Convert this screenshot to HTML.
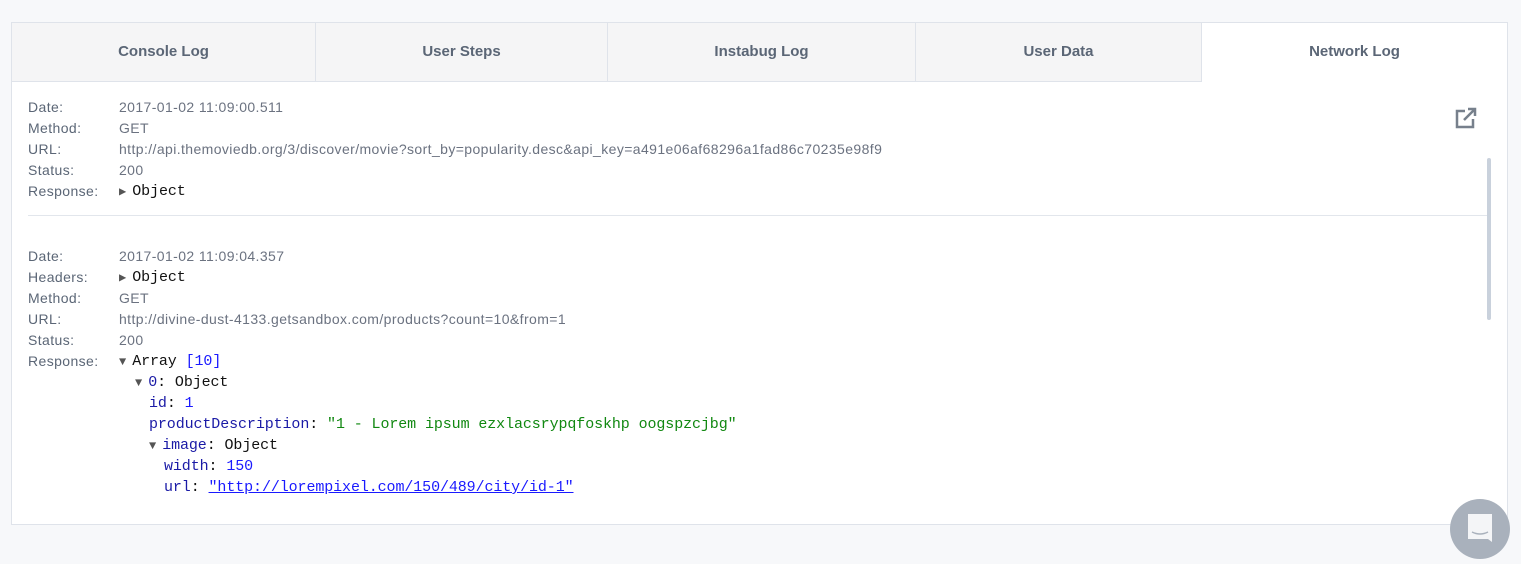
<!DOCTYPE html>
<html><head><style>
body{margin:0;background:#f7f8fa;width:1521px;height:564px;overflow:hidden;font-family:"Liberation Sans",sans-serif;}
.panel{position:absolute;left:11px;top:22px;width:1497px;height:503px;background:#fff;border:1px solid #dfe3ea;box-sizing:border-box;}
.tabs{position:absolute;left:0;top:0;height:59px;width:100%;}
.tab{position:absolute;top:0;height:59px;background:#f5f5f6;border-right:1px solid #dfe3ea;border-bottom:1px solid #dfe3ea;color:#5b6676;font-size:15px;font-weight:bold;line-height:57px;text-align:center;box-sizing:border-box;}
.tab.act{background:#fff;border:none;color:#5b6676;}
.row{position:absolute;left:16px;font-size:14px;letter-spacing:0.4px;color:#5b6676;height:21px;line-height:21px;white-space:nowrap;}
.row .v{position:absolute;left:91px;color:#6b7280;}
.row .v.mono,.mono{font-family:"Liberation Mono",monospace;font-size:15px;letter-spacing:-0.1px;color:#111;}
.tri{color:#555;font-size:12px;margin-right:6px;letter-spacing:0;}
.k{color:#1a1aa6;} .n{color:#1a1aff;} .s{color:#118811;}
a{color:#1a1aff;text-decoration:underline;}
</style></head><body>
<div class="panel">
<div class="tabs">
<div class="tab" style="left:0;width:304px">Console Log</div>
<div class="tab" style="left:304px;width:292px">User Steps</div>
<div class="tab" style="left:596px;width:308px">Instabug Log</div>
<div class="tab" style="left:904px;width:286px">User Data</div>
<div class="tab act" style="left:1190px;width:305px">Network Log</div>
</div>
<svg style="position:absolute;left:1443px;top:84px" width="22" height="22" viewBox="0 0 22 22"><path d="M10 4H2v16h16v-8" fill="none" stroke="#77808c" stroke-width="2.5"/><path d="M9 13L19 3M13 2h7v7" fill="none" stroke="#77808c" stroke-width="2.5"/></svg>
<div style="position:absolute;left:1475px;top:135px;width:4px;height:162px;background:#c9d1dc;border-radius:2px"></div>
<div style="position:absolute;left:16px;top:192px;width:1459px;height:1px;background:#e2e6ec"></div>

<div class="row" style="top:74px">Date:<span class="v">2017-01-02 11:09:00.511</span></div>
<div class="row" style="top:95px">Method:<span class="v">GET</span></div>
<div class="row" style="top:116px">URL:<span class="v">http://api.themoviedb.org/3/discover/movie?sort_by=popularity.desc&amp;api_key=a491e06af68296a1fad86c70235e98f9</span></div>
<div class="row" style="top:137px">Status:<span class="v">200</span></div>
<div class="row" style="top:158px">Response:<span class="v mono"><span class="tri">▶</span>Object</span></div>

<div class="row" style="top:223px">Date:<span class="v">2017-01-02 11:09:04.357</span></div>
<div class="row" style="top:244px">Headers:<span class="v mono"><span class="tri">▶</span>Object</span></div>
<div class="row" style="top:265px">Method:<span class="v">GET</span></div>
<div class="row" style="top:286px">URL:<span class="v">http://divine-dust-4133.getsandbox.com/products?count=10&amp;from=1</span></div>
<div class="row" style="top:307px">Status:<span class="v">200</span></div>
<div class="row" style="top:328px">Response:<span class="v mono"><span class="tri">▼</span>Array <span class="n">[10]</span></span></div>
<div class="row mono" style="top:349px;left:123px"><span class="tri">▼</span><span class="k">0</span>: Object</div>
<div class="row mono" style="top:370px;left:137px"><span class="k">id</span>: <span class="n">1</span></div>
<div class="row mono" style="top:391px;left:137px"><span class="k">productDescription</span>: <span class="s">"1 - Lorem ipsum ezxlacsrypqfoskhp oogspzcjbg"</span></div>
<div class="row mono" style="top:412px;left:137px"><span class="tri">▼</span><span class="k">image</span>: Object</div>
<div class="row mono" style="top:433px;left:152px"><span class="k">width</span>: <span class="n">150</span></div>
<div class="row mono" style="top:454px;left:152px"><span class="k">url</span>: <a>"http://lorempixel.com/150/489/city/id-1"</a></div>
</div>
<div style="position:absolute;left:1450px;top:499px;width:60px;height:60px;border-radius:50%;background:#a9b1bc"></div>
<svg style="position:absolute;left:1465px;top:512px" width="30" height="32" viewBox="0 0 30 32"><path d="M3 2h24v28l-4-3H3z" fill="#f4f5f7"/><path d="M7 20q8 4 16 0" fill="none" stroke="#a9b1bc" stroke-width="1.5"/></svg>
</body></html>
